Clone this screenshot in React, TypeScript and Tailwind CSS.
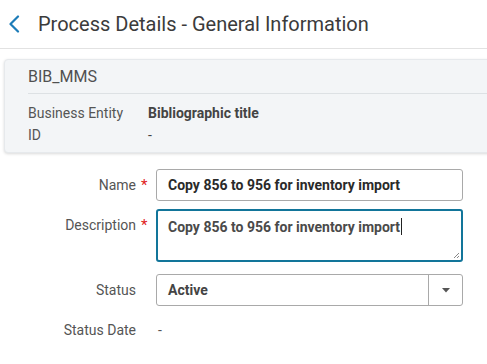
import React from "react";

function Label({ text, required }: { text: string; required?: boolean }) {
  return (
    <div className="flex w-[156px] shrink-0 items-center">
      <div className="w-[136px] text-right text-[14px] text-[#555]">{text}</div>
      <div className="w-[20px] pl-[5px] text-[15px] leading-none text-[#e02020]">{required ? "*" : ""}</div>
    </div>
  );
}

export default function App() {
  return (
    <div
      className="h-[364px] w-[487px] overflow-hidden bg-white"
      style={{ fontFamily: "Roboto, 'Liberation Sans', sans-serif" }}
    >
      <div className="flex h-[49px] items-center border-b border-[#e2e2e2]">
        <svg width="12" height="18" viewBox="0 0 12 18" className="ml-[8px]" fill="none">
          <path d="M10 1.5 L2.5 9 L10 16.5" stroke="#1c7cb8" strokeWidth="2.2" strokeLinecap="round" strokeLinejoin="round" />
        </svg>
        <div className="ml-[18px] text-[20px] text-[#3b3b3b]">Process Details - General Information</div>
      </div>

      <div className="ml-[4px] mr-[-10px] mt-[10px] rounded-[4px] border border-[#e6e9ec] bg-[#f3f5f7] pb-[6px] pl-[23px] shadow-[0_1px_3px_rgba(0,0,0,0.15)]">
        <div className="flex h-[33px] items-center text-[16px] text-[#505050]">BIB_MMS</div>
        <div className="h-px bg-[#dde1e4]" />
        <div className="pt-[8px] text-[14px]">
          <div className="flex h-[22px] items-center">
            <div className="w-[120px] text-[#555]">Business Entity</div>
            <div className="font-bold text-[#444]">Bibliographic title</div>
          </div>
          <div className="flex h-[22px] items-center">
            <div className="w-[120px] text-[#555]">ID</div>
            <div className="text-[#444]">-</div>
          </div>
        </div>
      </div>

      <div className="mt-[16px] flex flex-col">
        <div className="flex h-[32px] items-center">
          <Label text="Name" required />
          <div className="flex h-[32px] w-[307px] items-center rounded-[3px] border border-[#a9a9a9] pl-[11px] text-[14px] font-bold text-[#2a2a2a]">
            Copy 856 to 956 for inventory import
          </div>
        </div>

        <div className="mt-[8px] flex">
          <div className="pt-[6px] leading-[20px]">
            <Label text="Description" required />
          </div>
          <div className="relative h-[53px] w-[307px] rounded-[3px] border-2 border-[#12759a] pl-[10px] pt-[4px] text-[14px] leading-[20px] font-bold text-[#4a4a4a]">
            Copy 856 to 956 for inventory import<span className="ml-px inline-block h-[17px] w-px translate-y-[3px] bg-[#222]" />
            <svg width="8" height="8" viewBox="0 0 8 8" className="absolute bottom-[1px] right-[1px]">
              <path d="M7 2 L2 7 M7 5 L5 7" stroke="#888" strokeWidth="1" />
            </svg>
          </div>
        </div>

        <div className="mt-[12px] flex h-[32px] items-center">
          <Label text="Status" />
          <div className="flex h-[32px] w-[307px] items-stretch rounded-[3px] border border-[#a9a9a9]">
            <div className="flex flex-1 items-center pl-[11px] text-[14px] font-bold text-[#444]">Active</div>
            <div className="flex w-[34px] items-center justify-center border-l border-[#a9a9a9]">
              <svg width="8" height="5" viewBox="0 0 8 5">
                <path d="M0 0 L8 0 L4 4.5 Z" fill="#555" />
              </svg>
            </div>
          </div>
        </div>

        <div className="mt-[12px] flex h-[24px] items-center">
          <Label text="Status Date" />
          <div className="pl-[2px] text-[14px] text-[#555]">-</div>
        </div>
      </div>
    </div>
  );
}
